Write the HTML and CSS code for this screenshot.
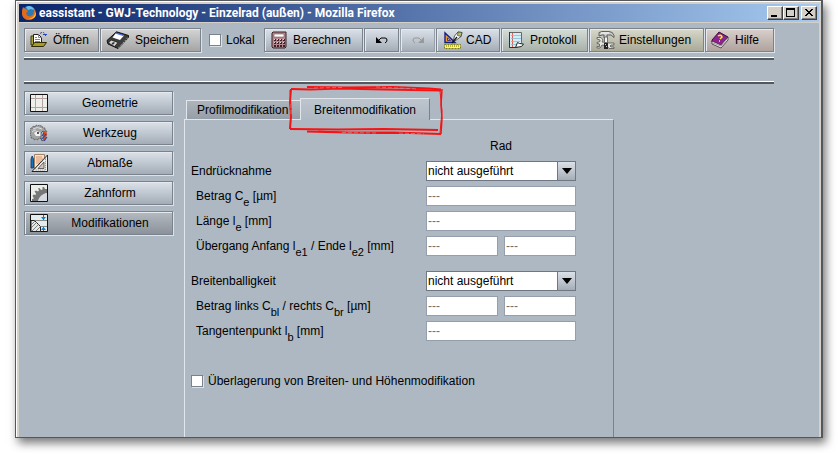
FILE: index.html
```html
<!DOCTYPE html>
<html lang="de">
<head>
<meta charset="utf-8">
<title>eassistant - GWJ-Technology</title>
<link rel="stylesheet" href="styles.css">
</head>
<body>
<div class="window">
  <header class="titlebar">
    <svg class="app-icon" viewBox="0 0 16 16" aria-hidden="true">
      <circle cx="8" cy="8" r="7" fill="#2b79b8"/>
      <path d="M5 2q3-2 6 0 2 1 2 3l-3-1-3 1z" fill="#69bdea"/>
      <path d="M2 2l2 2 2 .5 1 2-2 1.500 1 2.500 3 1 3-2 1-3-1-3q3 2 2.500 6Q14 14 8.500 15 2 15 1 9q-.4-4 1-7z" fill="#e66a14"/>
      <path d="M13 5q2 3 0 6-2 3-6 2 4 2 7-1 2-3-1-7z" fill="#ffc83a"/>
    </svg>
    <h1 class="title">eassistant - GWJ-Technology - Einzelrad (außen) - Mozilla Firefox</h1>
    <div class="window-buttons">
      <button class="winbtn" type="button" aria-label="Minimieren"><svg viewBox="0 0 12 10"><path d="M2 7h6v2H2z"/></svg></button>
      <button class="winbtn" type="button" aria-label="Maximieren"><svg viewBox="0 0 12 10"><path d="M1 0h9v9H1zM2 2v6h7V2z" fill-rule="evenodd"/></svg></button>
      <button class="winbtn winbtn-close" type="button" aria-label="Schließen"><svg viewBox="0 0 12 10"><path d="M2 1h2v1h1v1h2V2h1V1h2v1H9v1H8v1H7v1h1v1h1v1h1v1H8V7H7V6H5v1H4v1H2V7h1V6h1V5h1V4H4V3H3V2H2z"/></svg></button>
    </div>
  </header>

  <main class="app">
    <div class="toolbar" role="toolbar">
      <button class="btn gray open" type="button">
        <svg class="ico" viewBox="0 0 18 18"><path d="M1 5h3v9H1z" fill="#a9a13a" stroke="#3a3813"/><path d="M3.500 3.500h5l3 3v7h-8z" fill="#fff" stroke="#222"/><path d="M8.500 3.500v3h3M5 8.500h5M5 10.500h5M5 6.500h2" fill="none" stroke="#888"/><path d="M1.500 15.500l3-4h12l-3 4z" fill="#a89c22" stroke="#2f2b08"/><path d="M10 2.500q4-3 5.500 2" fill="none" stroke="#2345c8" stroke-dasharray="2 1"/><path d="M13 3h4v1h-1v1h-1V4h-2z" fill="#2345c8"/></svg>
        <span>Öffnen</span>
      </button>
      <button class="btn gray save" type="button">
        <svg class="ico-l" viewBox="0 0 24 18"><path d="M1 9.500L10.500.8l12 3.700v2L12 17.500 2 13z" fill="#3c3c3c" stroke="#111"/><path d="M10 2l8 2.500-4 4.500-7.500-2.500z" fill="#fff"/><path d="M10 1.500l8 2.500-1 1-8-2.500z" fill="#4868f0"/><path d="M5 9l7 2.500-3.500 4L2.500 12z" fill="#d8d8d8" stroke="#111" stroke-width=".7"/><path d="M7 11l2 .8-2 2-1.500-.8z" fill="#333"/><path d="M12.500 17L22 6.500" stroke="#aaa" stroke-dasharray="2 1"/></svg>
        <span>Speichern</span>
      </button>
      <label class="check local"><input type="checkbox"><span>Lokal</span></label>
      <button class="btn calc" type="button">
        <svg class="ico" viewBox="0 0 18 18"><path d="M3 1h13v15l-1 1H3l-1-1V2z" fill="#b88990" stroke="#362329"/><path d="M4 3h10v3H4z" fill="#fff" stroke="#795055" stroke-width=".6"/><path d="M4 8h2v2H4zm3 0h2v2H7zm3 0h2v2h-2zm3 0h2v2h-2zM4 11h2v2H4zm3 0h2v2H7zm3 0h2v2h-2zm3 0h2v2h-2zM4 14h2v2H4zm3 0h2v2H7zm3 0h2v2h-2zm3 0h2v2h-2z" fill="#3c2328"/><path d="M4 8h1v1H4zm3 0h1v1H7zm3 0h1v1h-1zm3 0h1v1h-1zM4 11h1v1H4zm3 0h1v1H7zm3 0h1v1h-1zm3 0h1v1h-1z" fill="#ead1d4"/></svg>
        <span>Berechnen</span>
      </button>
      <button class="btn arrow" type="button" aria-label="Rückgängig"><svg class="ico-a" viewBox="0 0 14 10"><path d="M1 2v6h6z"/><path d="M4 5l2-2h4q2 0 2 2t-2 3" fill="none" stroke="#000"/></svg></button>
      <button class="btn arrow" type="button" aria-label="Wiederholen" disabled><svg class="ico-a" viewBox="0 0 14 10"><path d="M13 2v6H7z" fill="#999"/><path d="M10 5L8 3H4Q2 3 2 5t2 3" fill="none" stroke="#999"/></svg></button>
      <button class="btn cad" type="button">
        <svg class="ico-l" viewBox="0 0 22 18"><path d="M3 2v9.500h10z" fill="#f09a30" stroke="#17207e" stroke-width="1.400"/><path d="M5.500 7v2.500h3z" fill="#dfe4ea" stroke="#17207e" stroke-width=".8"/><path d="M2.500 13.500h16v4h-16z" fill="#ffff35" stroke="#55500a" stroke-width=".7" stroke-dasharray="2 1"/><path d="M4.500 16v-2m2 2v-2m2 2v-2m2 2v-2m2 2v-2m2 2v-2m2 2v-2" stroke="#99931a" stroke-width=".7"/><path d="M11 11l1.500-6L16 1l4 .5-1 4-4 3z" fill="#fff" stroke="#333" stroke-width=".8"/><path d="M16 1l4 .5-1 4-3.500-1z" fill="#b4bf6a" stroke="#333" stroke-width=".6"/><path d="M10 12l5-6" stroke="#111" stroke-width="1.200"/></svg>
        <span>CAD</span>
      </button>
      <button class="btn green protocol" type="button">
        <svg class="ico" viewBox="0 0 18 18"><path d="M2.500 1.500h12v10l-4 5h-8z" fill="#d4ecf6" stroke="#666"/><path d="M5.500 2v14" stroke="#e0604e"/><path d="M4 4.500h10M4 7.500h10M4 10.500h9M4 13.500h6" stroke="#8cbcd4" stroke-width=".8"/><path d="M8.500 16.500l2-5 2 1 4 .5-2 2.500z" fill="#fff" stroke="#222"/><path d="M2.500 1v15.500h6" fill="none" stroke="#333"/></svg>
        <span>Protokoll</span>
      </button>
      <button class="btn khaki settings" type="button">
        <svg class="ico-l" viewBox="0 0 20 18"><path d="M3 1.500l3-1h7q4 0 5 4v2l-3-2.500h-4v3H8v-3H6L3 5z" fill="#c9ccca" stroke="#444" stroke-width=".8"/><path d="M5 2h8" stroke="#fff"/><path d="M8.500 6h3v6h-3z" fill="#f4f4f2" stroke="#555" stroke-width=".8"/><path d="M1 6.500h4l2 2.500-1 2 7 1h5v2h-3l-1 1 1 1h3v1.500h-5L11 15l-5-1-2 3H1v-1.500h2.500V13L1 12.500v-1l3-1V9L1 8z" fill="#e4e4e0" stroke="#555" stroke-width=".8"/><path d="M8 12h4v6H8z" fill="#222"/><path d="M9 13h1v1H9zm1 2h1v1h-1z" fill="#ccc"/></svg>
        <span>Einstellungen</span>
      </button>
      <button class="btn rose help" type="button">
        <svg class="ico" viewBox="0 0 18 18"><path d="M1 9L8 1l9 5-7 9-9-4z" fill="#8c218f" stroke="#391040"/><path d="M1 10l9 4 7-8v3l-7 8-9-4z" fill="#eee" stroke="#43263d" stroke-width=".8"/><path d="M2 12l8 3 6-7" fill="none" stroke="#999"/><path d="M7 5q3-2 4 1L9 8m-1 2h1" fill="none" stroke="#ffed24" stroke-width="1.500"/></svg>
        <span>Hilfe</span>
      </button>
    </div>

    <div class="message-strip"></div>

    <div class="workspace">
      <nav class="sidebar">
        <button class="btn side" type="button">
          <svg class="ico" viewBox="0 0 18 18"><path d="M.5.5h17v17H.5z" fill="#eeefe9" stroke="#111"/><path d="M5.500 1v16M12.500 1v16M1 4.500h16M1 13.500h16" stroke="#b3a3a6"/></svg>
          <span>Geometrie</span>
        </button>
        <button class="btn side" type="button">
          <svg class="ico" viewBox="0 0 18 18"><path d="M1 4l2 0 0-2 2 1 1-2 2 1 1-1 2 1 1 0 1 2h2l0 2 2 1-1 2 1 2-2 1-1 2-2-1-1 2-2-1-1 2-2-1-2 1-1-2-2 0 0-2L0 10l1-2-1-2z" fill="#a2a5a4" stroke="#555" stroke-width=".8" stroke-dasharray="2 .6"/><path d="M3 5q4-3 9 0M2 8q2-2 4-2" stroke="#ddd" fill="none"/><path d="M4 9l3-2 4 2v3H6z" fill="#f2f2f2"/><path d="M7 8h2v2H7z" fill="#555"/><path d="M11 9l2-2 2 1v7l-3 2-1-3z" fill="#b9bcc0" stroke="#333" stroke-width=".7"/><path d="M13 8l3-1 1 3-2 7h-2z" fill="#d9501e"/><path d="M12 12l2-3M12 15l4-5M14 17l3-4" stroke="#2446a8" stroke-width="1.200"/></svg>
          <span>Werkzeug</span>
        </button>
        <button class="btn side" type="button">
          <svg class="ico" viewBox="0 0 18 18"><path d="M4.500.5h10v14h-10z" fill="#f6e3c8" stroke="#a08468"/><path d="M6 3h6M6 5h7M6 7h5M6 9h4" stroke="#d88058" stroke-width=".8"/><path d="M2 17.500L17.500 1v16.500z" fill="#f2f2f0" stroke="#111" stroke-width=".9"/><path d="M8 14.500l6-6.500v6.500z" fill="#d3c4b8" stroke="#444" stroke-width=".8"/><path d="M5 15L15.500 4v12H5" fill="none" stroke="#666" stroke-width=".8" stroke-dasharray="1 1"/><path d="M1 5l1.200-3L3.500 5v9H1z" fill="#1a72ba" stroke="#152e60" stroke-width=".8"/></svg>
          <span>Abmaße</span>
        </button>
        <button class="btn side" type="button">
          <svg class="ico" viewBox="0 0 18 18"><path d="M.5.5h17v17H.5z" fill="#eceee9" stroke="#111"/><path d="M2 17v-2l2-.5L2.500 12l1-1.500 2 .5.500-1.500-1.500-2L6 6.500l2 1 1-1-1-2L9.500 4l1.500 2 1.500-.5L12.500 3H14l1 2h2v4q-5 1-8 6l-1 2z" fill="#777"/><path d="M8 17q2-7 9-8v8z" fill="#d3d9de"/></svg>
          <span>Zahnform</span>
        </button>
        <button class="btn side current" type="button" aria-current="page">
          <svg class="ico" viewBox="0 0 18 18"><path d="M.5.5h17v17H.5z" fill="#e5ecee" stroke="#111"/><path d="M1 6.500h3.500l6 6v5H1z" fill="#e8e8e8" stroke="#222"/><path d="M1 11l4-4M1 14l6-6M2 17l7-7M6 17l5-5" stroke="#666" stroke-width=".8"/><path d="M5 6.500h12M11 12.500h6" stroke="#888"/><path d="M13.500 1v5M13.500 13v4" stroke="#0a80c8"/><path d="M11 3h5l-2.500 3zM11 16h5l-2.500-3z" fill="#0a80c8"/></svg>
          <span>Modifikationen</span>
        </button>
      </nav>

      <section class="editor">
        <div class="tabs" role="tablist">
          <button class="tab" type="button" role="tab" aria-selected="false">Profilmodifikation</button>
          <button class="tab active" type="button" role="tab" aria-selected="true">Breitenmodifikation</button>
          <svg class="marker" viewBox="0 0 156 52" aria-hidden="true">
            <g fill="none" stroke="#f51414">
              <path d="M3 5l20 .5 28-1 45 1 57 1" stroke-width="2"/>
              <path d="M19 3l40 .5 46-.5 36 1.500 12 1" stroke-width="2"/>
              <path d="M3 5L2 18l1 15-1 12" stroke-width="2"/>
              <path d="M2 6l1 17-1 22" stroke-width="1"/>
              <path d="M2 45l48 .5 46-.5 54 1" stroke-width="2"/>
              <path d="M19 47.500l39 1 48 0 47 1.500" stroke-width="2"/>
              <path d="M30 47l51 2.500 70 0" stroke-width="1"/>
              <path d="M154 5l-1 16 1 13-1 16" stroke-width="1.500"/>
              <path d="M152 7l2 20-2 22" stroke-width="1"/>
            </g>
            <path d="M26 4l28-.5M88 3l42 2M54 48.500l35 .5M111 49l25 1M3 20v12" stroke="#c68b93" stroke-width=".7" fill="none" stroke-dasharray="4 2"/>
          </svg>
        </div>
        <form class="panel">
          <div class="row"><span></span><span class="column-head">Rad</span></div>
          <div class="row">
            <label for="endr">Endrücknahme</label>
            <div class="select"><select id="endr"><option>nicht ausgeführt</option></select><span class="drop"><svg viewBox="0 0 10 6"><path d="M0 0h10L5 6z"/></svg></span></div>
          </div>
          <div class="row sub-row"><label for="ce">Betrag C<sub>e</sub> [µm]</label><input id="ce" type="text" value="---"></div>
          <div class="row sub-row"><label for="le">Länge l<sub>e</sub> [mm]</label><input id="le" type="text" value="---"></div>
          <div class="row sub-row">
            <label for="le1">Übergang Anfang l<sub>e1</sub> / Ende l<sub>e2</sub> [mm]</label>
            <div class="pair"><input id="le1" type="text" value="---"><input aria-label="Übergang Ende" type="text" value="---"></div>
          </div>
          <div class="row group">
            <label for="ball">Breitenballigkeit</label>
            <div class="select"><select id="ball"><option>nicht ausgeführt</option></select><span class="drop"><svg viewBox="0 0 10 6"><path d="M0 0h10L5 6z"/></svg></span></div>
          </div>
          <div class="row sub-row">
            <label for="cbl">Betrag links C<sub>bl</sub> / rechts C<sub>br</sub> [µm]</label>
            <div class="pair"><input id="cbl" type="text" value="---"><input aria-label="Betrag rechts" type="text" value="---"></div>
          </div>
          <div class="row sub-row"><label for="lb">Tangentenpunkt l<sub>b</sub> [mm]</label><input id="lb" type="text" value="---"></div>
          <label class="check overlay-check"><input type="checkbox"><span>Überlagerung von Breiten- und Höhenmodifikation</span></label>
        </form>
      </section>
    </div>
  </main>
</div>
</body>
</html>
```

FILE: styles.css
```css
* { box-sizing: border-box; }

body {
  margin: 0;
  padding: 0 15px 15px;
  min-height: 100vh;
  display: flex;
  background: #fff;
  color: #000;
  font: 12px/16px "Liberation Sans", Arial, sans-serif;
  overflow: hidden;
}

button, input, select { font: inherit; color: inherit; margin: 0; }

.window {
  flex: 1;
  display: flex;
  flex-direction: column;
  padding: 3px 2px 0 3px;
  border: 1px solid #54585c;
  border-right-width: 2px;
  background: #d4d0c8;
  box-shadow: inset 1px 1px 0 #fff, 3px 5px 9px #777;
}

.titlebar {
  display: flex;
  align-items: center;
  height: 18px;
  padding: 0 2px;
  gap: 2px;
  background: linear-gradient(90deg, #0a246a, #a6caf0);
}
.app-icon { width: 16px; height: 16px; }
.title {
  flex: 1;
  margin: 0;
  color: #fff;
  font: bold 12px/16px Roboto, "Liberation Sans", sans-serif;
}
.window-buttons { display: flex; }
.winbtn {
  width: 16px;
  height: 14px;
  padding: 0;
  display: grid;
  place-items: center;
  background: #d4d0c8;
  border: 1px solid;
  border-color: #fff #404040 #404040 #fff;
  box-shadow: inset -1px -1px 0 #808080;
}
.winbtn svg { width: 12px; height: 10px; }
.winbtn-close { margin-left: 2px; }

.app {
  flex: 1;
  display: flex;
  flex-direction: column;
  margin-top: 1px;
  padding: 5px 45px 0 5px;
  background: #aeb8c2;
}

.toolbar { display: flex; gap: 1px; }

.btn {
  display: flex;
  align-items: center;
  height: 24px;
  padding: 0 5px;
  gap: 5px;
  border: 1px solid #7a828c;
  background: linear-gradient(#dbe1e9, #a4adb7);
  box-shadow: inset 1px 1px 0 #e6eaef, 1px 1px 0 #dde2e8;
  white-space: nowrap;
}
.btn.gray { background: linear-gradient(#d4d4d4, #a5a5a5); }
.btn.green { background: linear-gradient(#d6ddd8, #a7b1aa); }
.btn.khaki { background: linear-gradient(#d8d8cb, #aaaa99); }
.btn.rose { background: linear-gradient(#d9d0cc, #afa39e); }
.ico { width: 18px; height: 18px; flex: none; }
.ico-l { width: 22px; height: 18px; flex: none; }
.ico-a { width: 14px; height: 10px; }
.open { min-width: 75px; }
.save { min-width: 101px; }
.save .ico-l { width: 24px; }
.calc { min-width: 99px; }
.btn.arrow { width: 35px; padding: 0; justify-content: center; }
.cad { min-width: 64px; }
.cad, .settings { gap: 2px; }
.protocol { min-width: 87px; }
.settings { min-width: 115px; }
.help { min-width: 69px; gap: 6px; }
.btn:disabled { border-color: #98a1ab; }

.check { display: flex; align-items: center; gap: 5px; }
.check input {
  appearance: none;
  width: 12px;
  height: 12px;
  background: #fff;
  border: 1px solid #7a828c;
  box-shadow: 1px 1px 0 #dde2e8;
}
.local { min-width: 61px; padding-left: 7px; }

.message-strip {
  height: 26px;
  margin-top: 6px;
  border: solid #54585c;
  border-width: 2px 0;
  box-shadow: 0 -1px 0 #fff, inset 0 -1px 0 #fff;
}

.workspace { flex: 1; display: flex; gap: 11px; }

.sidebar {
  width: 149px;
  padding-top: 7px;
  display: flex;
  flex-direction: column;
  gap: 6px;
}
.side span { flex: 1; text-align: center; }
.btn.current { background: linear-gradient(#b5bac0, #8b929b); }

.editor {
  flex: 0 1 430px;
  display: flex;
  flex-direction: column;
  padding-top: 14px;
}
.tabs {
  position: relative;
  display: flex;
  align-items: flex-end;
  padding-left: 2px;
}
.tab {
  width: 114px;
  height: 19px;
  padding: 0 0 0 10px;
  text-align: left;
  white-space: nowrap;
  overflow: hidden;
  border: 1px solid #e2e6eb;
  border-width: 1px 0 0 1px;
  background: linear-gradient(#adb4bb, #959da6);
}
.tab.active {
  width: 130px;
  height: 22px;
  margin-bottom: -1px;
  padding: 0;
  text-align: center;
  z-index: 1;
  border-right: 1px solid #7a828c;
  background: linear-gradient(#bdc5ce, #aeb8c2);
}
.marker {
  position: absolute;
  left: 104px;
  top: -14px;
  width: 156px;
  height: 52px;
  z-index: 2;
  pointer-events: none;
}

.panel {
  flex: 1;
  display: flex;
  flex-direction: column;
  gap: 5px;
  padding: 16px 6px 0;
  border: 1px solid #e2e6eb;
  border-right: 1px solid #7a828c;
  border-bottom: 0;
}
.row {
  display: grid;
  grid-template-columns: 235px 150px;
  align-items: center;
  height: 20px;
}
.column-head { text-align: center; }
.sub-row label { padding-left: 5px; }
.group { margin-top: 10px; }
sub { font-size: 11px; line-height: 0; vertical-align: -6px; }

.panel input[type="text"] {
  width: 100%;
  min-width: 0;
  height: 20px;
  padding: 0 1px;
  color: #707070;
  background: #fff;
  border: 1px solid #949fab;
}
.pair { display: grid; grid-template-columns: 1fr 1fr; gap: 6px; }

.select { position: relative; height: 20px; }
.select select {
  appearance: none;
  width: 100%;
  height: 20px;
  padding: 0 20px 0 1px;
  border: 1px solid #6f7882;
  border-radius: 0;
  background: #fff;
}
.drop {
  position: absolute;
  top: 0;
  right: 0;
  width: 19px;
  height: 20px;
  display: grid;
  place-items: center;
  border: 1px solid #6f7882;
  background: linear-gradient(#dbe1e9, #a4adb7);
  pointer-events: none;
}
.drop svg { width: 10px; height: 6px; }
.overlay-check { margin-top: 27px; }
```
